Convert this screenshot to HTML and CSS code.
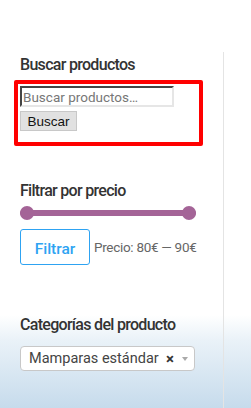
FILE: index.html
```html
<!DOCTYPE html>
<html lang="es">
<head>
<meta charset="utf-8">
<link rel="stylesheet" href="styles.css">
</head>
<body>
<div class="page">
  <aside class="sidebar">
    <section class="widget search">
      <h4 class="title">Buscar productos</h4>
      <div class="highlight">
        <input class="field" type="text" placeholder="Buscar productos…">
        <button class="btn">Buscar</button>
      </div>
    </section>
    <section class="widget price">
      <h4 class="title">Filtrar por precio</h4>
      <div class="slider">
        <span class="handle"></span>
        <span class="handle"></span>
      </div>
      <div class="price-row">
        <button class="filter">Filtrar</button>
        <span class="label">Precio: 80€ — 90€</span>
      </div>
    </section>
    <section class="widget cats">
      <h4 class="title">Categorías del producto</h4>
      <div class="select">
        <span class="sel-text">Mamparas estándar</span>
        <span class="clear">×</span>
        <span class="arrow"></span>
      </div>
    </section>
  </aside>
</div>
</body>
</html>
```
FILE: styles.css
```css
html, body {
  margin: 0;
  padding: 0;
}
body {
  width: 251px;
  height: 408px;
  overflow: hidden;
  background: linear-gradient(to bottom, #ffffff 0px, #ffffff 315px, #eaf2f8 340px, #c6dbec 408px);
  font-family: Roboto, "Noto Sans", sans-serif;
}
.page {
  padding-top: 52px;
  height: 356px;
}
.sidebar {
  width: 203px;
  height: 356px;
  padding-left: 20px;
  border-right: 1px solid #e4e4e4;
  box-sizing: content-box;
}
.title {
  margin: 0;
  font-size: 16px;
  font-weight: 500;
  color: #333;
  letter-spacing: -0.7px;
  line-height: 24px;
}
.search .title {
  padding-top: 1px;
}
.highlight {
  margin-top: 3px;
  margin-left: -6px;
  width: 179px;
  border: 4px solid #ff0000;
  border-radius: 2px;
  padding: 2px 0 11px 2px;
  display: flex;
  flex-direction: column;
  align-items: flex-start;
  gap: 4px;
}
.field {
  width: 154px;
  height: 21px;
  box-sizing: border-box;
  border: 2px inset #eee;
  border-color: #999 #e6e6e6 #e6e6e6 #999;
  font-family: Roboto, sans-serif;
  font-size: 13.5px;
  padding: 0 1px;
  margin: 0;
  color: #333;
}
.field::placeholder {
  color: #777;
}
.btn {
  width: 57px;
  height: 20px;
  box-sizing: border-box;
  margin: 0;
  padding: 0;
  background: #e1e1e1;
  border: 1px solid #c8c8c8;
  border-radius: 0;
  font-family: "Liberation Sans", Arial, sans-serif;
  font-size: 13.5px;
  color: #111;
}
.price {
  margin-top: 33px;
}
.slider {
  position: relative;
  margin-top: 7px;
  width: 176px;
  height: 6px;
  background: #a46497;
  border-radius: 3px;
}
.handle {
  position: absolute;
  top: -4px;
  width: 14px;
  height: 14px;
  border-radius: 50%;
  background: #a46497;
}
.handle:first-child { left: 0; }
.handle:last-child { right: 0; }
.price-row {
  margin-top: 13px;
  display: flex;
  align-items: center;
  gap: 4px;
}
.filter {
  width: 70px;
  height: 36px;
  box-sizing: border-box;
  margin: 0;
  background: #fff;
  border: 1px solid #2ea3f2;
  border-radius: 3px;
  color: #2ea3f2;
  font-family: Roboto, sans-serif;
  font-size: 15.5px;
  font-weight: 500;
  padding: 3px 0 0;
}
.label {
  font-size: 13.5px;
  color: #666;
  letter-spacing: -0.3px;
}
.cats {
  margin-top: 48px;
}
.select {
  margin-top: 9px;
  width: 175px;
  height: 25px;
  box-sizing: border-box;
  background: #fff;
  border: 1px solid #c8c8c8;
  border-radius: 4px;
  display: flex;
  align-items: center;
  padding-left: 8px;
}
.sel-text {
  font-size: 14.5px;
  color: #444;
  flex: 1;
}
.clear {
  font-size: 15px;
  font-weight: 700;
  color: #333;
  margin-right: 8px;
}
.arrow {
  width: 0;
  height: 0;
  border-left: 3px solid transparent;
  border-right: 3px solid transparent;
  border-top: 4px solid #aaa;
  margin-right: 6px;
}
```
